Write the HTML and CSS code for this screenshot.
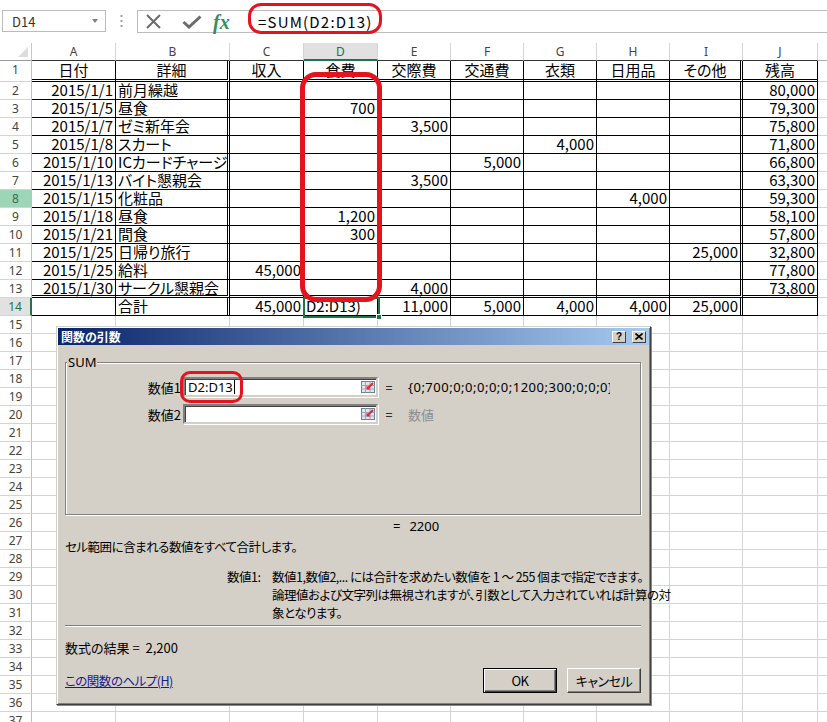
FILE: index.html
```html
<!DOCTYPE html>
<html lang="ja">
<head>
<meta charset="utf-8">
<link rel="stylesheet" href="styles.css">
</head>
<body>
<div class="topbar">
  <div class="namebox"><span>D14</span><span class="caret"></span></div>
  <div class="dots"><svg width="3" height="14" viewBox="0 0 3 14"><rect x="0.5" y="1" width="2" height="2" fill="#a0a0a0"/><rect x="0.5" y="6" width="2" height="2" fill="#a0a0a0"/><rect x="0.5" y="11" width="2" height="2" fill="#a0a0a0"/></svg></div>
  <div class="fbox">
    <div class="ficons">
      <svg class="ic-x" width="17" height="15" viewBox="0 0 17 15"><path d="M2 1L15 14M15 1L2 14" stroke="#6b6b6b" stroke-width="2" fill="none"/></svg>
      <svg class="ic-ok" width="20" height="14" viewBox="0 0 20 14"><path d="M1.5 7L7 12L18.5 1.5" stroke="#6b6b6b" stroke-width="3" fill="none"/></svg>
      <span class="fx">fx</span>
    </div>
    <div class="ftext">=SUM(D2:D13)</div>
  </div>
</div>

<div class="sheet cols">
  <div class="row">
    <div class="corner"><svg width="10" height="10" viewBox="0 0 10 10"><polygon points="10,0 10,10 0,10" fill="#dcdcdc"/></svg></div>
    <div class="ch">A</div><div class="ch">B</div><div class="ch">C</div><div class="ch sel">D</div><div class="ch">E</div><div class="ch">F</div><div class="ch">G</div><div class="ch">H</div><div class="ch">I</div><div class="ch">J</div><div class="ch kk"></div>
  </div>
  <div class="row r1">
    <div class="rh">1</div><div class="c m">日付</div><div class="c m dr">詳細</div><div class="c m">収入</div><div class="c m">食費</div><div class="c m">交際費</div><div class="c m">交通費</div><div class="c m">衣類</div><div class="c m">日用品</div><div class="c m dr">その他</div><div class="c m">残高</div><div class="k"></div>
  </div>
  <div class="row">
    <div class="rh">2</div><div class="c n">2015/1/1</div><div class="c dr">前月繰越</div><div class="c"></div><div class="c"></div><div class="c"></div><div class="c"></div><div class="c"></div><div class="c"></div><div class="c dr"></div><div class="c n">80,000</div><div class="k"></div>
  </div>
  <div class="row">
    <div class="rh">3</div><div class="c n">2015/1/5</div><div class="c dr">昼食</div><div class="c"></div><div class="c n">700</div><div class="c"></div><div class="c"></div><div class="c"></div><div class="c"></div><div class="c dr"></div><div class="c n">79,300</div><div class="k"></div>
  </div>
  <div class="row">
    <div class="rh">4</div><div class="c n">2015/1/7</div><div class="c dr">ゼミ新年会</div><div class="c"></div><div class="c"></div><div class="c n">3,500</div><div class="c"></div><div class="c"></div><div class="c"></div><div class="c dr"></div><div class="c n">75,800</div><div class="k"></div>
  </div>
  <div class="row">
    <div class="rh">5</div><div class="c n">2015/1/8</div><div class="c dr">スカート</div><div class="c"></div><div class="c"></div><div class="c"></div><div class="c"></div><div class="c n">4,000</div><div class="c"></div><div class="c dr"></div><div class="c n">71,800</div><div class="k"></div>
  </div>
  <div class="row">
    <div class="rh">6</div><div class="c n">2015/1/10</div><div class="c dr">ICカードチャージ</div><div class="c"></div><div class="c"></div><div class="c"></div><div class="c n">5,000</div><div class="c"></div><div class="c"></div><div class="c dr"></div><div class="c n">66,800</div><div class="k"></div>
  </div>
  <div class="row">
    <div class="rh">7</div><div class="c n">2015/1/13</div><div class="c dr">バイト懇親会</div><div class="c"></div><div class="c"></div><div class="c n">3,500</div><div class="c"></div><div class="c"></div><div class="c"></div><div class="c dr"></div><div class="c n">63,300</div><div class="k"></div>
  </div>
  <div class="row">
    <div class="rh g">8</div><div class="c n">2015/1/15</div><div class="c dr">化粧品</div><div class="c"></div><div class="c"></div><div class="c"></div><div class="c"></div><div class="c"></div><div class="c n">4,000</div><div class="c dr"></div><div class="c n">59,300</div><div class="k"></div>
  </div>
  <div class="row">
    <div class="rh">9</div><div class="c n">2015/1/18</div><div class="c dr">昼食</div><div class="c"></div><div class="c n">1,200</div><div class="c"></div><div class="c"></div><div class="c"></div><div class="c"></div><div class="c dr"></div><div class="c n">58,100</div><div class="k"></div>
  </div>
  <div class="row">
    <div class="rh">10</div><div class="c n">2015/1/21</div><div class="c dr">間食</div><div class="c"></div><div class="c n">300</div><div class="c"></div><div class="c"></div><div class="c"></div><div class="c"></div><div class="c dr"></div><div class="c n">57,800</div><div class="k"></div>
  </div>
  <div class="row">
    <div class="rh">11</div><div class="c n">2015/1/25</div><div class="c dr">日帰り旅行</div><div class="c"></div><div class="c"></div><div class="c"></div><div class="c"></div><div class="c"></div><div class="c"></div><div class="c n dr">25,000</div><div class="c n">32,800</div><div class="k"></div>
  </div>
  <div class="row">
    <div class="rh">12</div><div class="c n">2015/1/25</div><div class="c dr">給料</div><div class="c n">45,000</div><div class="c"></div><div class="c"></div><div class="c"></div><div class="c"></div><div class="c"></div><div class="c dr"></div><div class="c n">77,800</div><div class="k"></div>
  </div>
  <div class="row r13">
    <div class="rh">13</div><div class="c n">2015/1/30</div><div class="c dr">サークル懇親会</div><div class="c"></div><div class="c"></div><div class="c n">4,000</div><div class="c"></div><div class="c"></div><div class="c"></div><div class="c dr"></div><div class="c n">73,800</div><div class="k"></div>
  </div>
  <div class="row">
    <div class="rh hl">14</div><div class="c"></div><div class="c dr">合計</div><div class="c n">45,000</div><div class="c">D2:D13)</div><div class="c n">11,000</div><div class="c n">5,000</div><div class="c n">4,000</div><div class="c n">4,000</div><div class="c n dr">25,000</div><div class="c"></div><div class="k"></div>
  </div>
</div>

<div class="lower cols">
  <div class="rnums">
    <div>15</div><div>16</div><div>17</div><div>18</div><div>19</div><div>20</div><div>21</div><div>22</div><div>23</div><div>24</div><div>25</div><div>26</div><div>27</div><div>28</div><div>29</div><div>30</div><div>31</div><div>32</div><div>33</div><div>34</div><div>35</div><div>36</div><div>37</div>
  </div>
  <div class="gcol"></div><div class="gcol"></div><div class="gcol"></div><div class="gcol"></div><div class="gcol"></div><div class="gcol"></div><div class="gcol"></div><div class="gcol"></div><div class="gcol"></div><div class="gcol"></div><div class="gcol last"></div>
</div>

<div class="selbox"><span class="handle"></span></div>
<div class="redmark o1"></div>
<div class="redmark o2"></div>

<div class="dialog">
  <div class="titlebar">
    <span class="title">関数の引数</span>
    <div class="tbtns">
      <span class="tbtn">?</span>
      <span class="tbtn"><svg width="8" height="7" viewBox="0 0 8 7"><path d="M0.5 0.5L7.5 6.5M7.5 0.5L0.5 6.5" stroke="#000" stroke-width="1.6"/></svg></span>
    </div>
  </div>
  <div class="dbody">
    <div class="group">
      <div class="legend">SUM</div>
      <div class="arg">
        <span class="alabel">数値1</span>
        <span class="input"><span class="itext">D2:D13<span class="cursor"></span></span>
          <svg class="ricon" width="14" height="12" viewBox="0 0 14 12"><rect x="0.5" y="0.5" width="13" height="11" fill="#dfe6f0" stroke="#6f7f99"/><path d="M0.5 4.5H13.5M0.5 8H13.5M4.5 0.5V11.5M9 0.5V11.5" stroke="#9aa8bf" stroke-width="1"/><path d="M12 2L7 7" stroke="#e02828" stroke-width="2"/><path d="M5.5 4.5L5.5 8.5L9.5 8.5Z" fill="#e02828"/></svg>
        </span>
        <span class="eq">=</span>
        <span class="aval">{0;700;0;0;0;0;0;1200;300;0;0;0}</span>
      </div>
      <div class="arg arg2">
        <span class="alabel">数値2</span>
        <span class="input"><span class="itext"></span>
          <svg class="ricon" width="14" height="12" viewBox="0 0 14 12"><rect x="0.5" y="0.5" width="13" height="11" fill="#dfe6f0" stroke="#6f7f99"/><path d="M0.5 4.5H13.5M0.5 8H13.5M4.5 0.5V11.5M9 0.5V11.5" stroke="#9aa8bf" stroke-width="1"/><path d="M12 2L7 7" stroke="#e02828" stroke-width="2"/><path d="M5.5 4.5L5.5 8.5L9.5 8.5Z" fill="#e02828"/></svg>
        </span>
        <span class="eq">=</span>
        <span class="aval gray">数値</span>
      </div>
    </div>
    <div class="result"><span class="eq2">=</span><span>2200</span></div>
    <div class="desc">セル範囲に含まれる数値をすべて合計します。</div>
    <div class="argdesc">
      <span class="adl">数値1:</span>
      <span class="adt">数値1,数値2,... には合計を求めたい数値を 1 ～ 255 個まで指定できます。<br>論理値および文字列は無視されますが、引数として入力されていれば計算の対<br>象となります。</span>
    </div>
    <div class="sep"></div>
    <div class="formres">数式の結果 =&nbsp;&nbsp;2,200</div>
    <div class="foot">
      <span class="help">この関数のヘルプ(H)</span>
      <div class="btns"><span class="btn def">OK</span><span class="btn">キャンセル</span></div>
    </div>
  </div>
</div>
<div class="redmark o3"></div>
</body>
</html>
```

FILE: styles.css
```css
* { box-sizing: border-box; }
body {
  margin: 0;
  width: 827px;
  height: 722px;
  overflow: hidden;
  position: relative;
  background: #fff;
  font-family: "Noto Sans CJK JP", sans-serif;
  color: #000;
}

/* formula bar */
.topbar {
  height: 43px;
  display: flex;
  align-items: flex-start;
  padding-top: 10px;
}
.namebox {
  margin-left: 2px;
  width: 104px;
  height: 22px;
  border: 1px solid #bcbcbc;
  display: flex;
  align-items: center;
  justify-content: space-between;
  padding: 0 7px 0 9px;
  font-size: 13px;
  color: #333;
}
.caret {
  width: 0;
  height: 0;
  border-left: 3.5px solid transparent;
  border-right: 3.5px solid transparent;
  border-top: 4px solid #808080;
}
.dots {
  width: 31px;
  height: 22px;
  display: flex;
  align-items: center;
  justify-content: center;
}
.fbox {
  flex: 1;
  height: 23px;
  border: 1px solid #bcbcbc;
  border-right: none;
  display: flex;
  align-items: center;
}
.ficons {
  width: 109px;
  height: 100%;
  display: flex;
  align-items: center;
  padding-left: 7px;
}
.ic-ok { margin-left: 20px; }
.fx {
  margin-left: 11px;
  font-family: "Liberation Serif", serif;
  font-style: italic;
  font-weight: bold;
  font-size: 20px;
  color: #3e8a5a;
  line-height: 20px;
}
.ftext {
  padding-left: 11px;
  font-size: 15px;
  line-height: 20px;
  letter-spacing: 1.2px;
}

/* sheet */
.cols {
  display: grid;
  grid-template-columns: 32px 84px 114px 74px 74px 73px 73px 73px 73px 73px 75px 1fr;
}
.sheet {
  grid-template-rows: 18px 21px;
  grid-auto-rows: 18px;
}
.row { display: contents; }
.corner {
  border-right: 1px solid #c6c6c6;
  border-bottom: 1px solid #9b9b9b;
  display: flex;
  justify-content: flex-end;
  align-items: flex-end;
  padding: 0 3px 3px 0;
}
.ch {
  border-right: 1px solid #d4d4d4;
  border-bottom: 1px solid #333;
  font-family: "Noto Sans", sans-serif;
  font-size: 12px;
  line-height: 17px;
  color: #444;
  text-align: center;
}
.ch.sel {
  background: #e1e1e1;
  color: #217346;
  border-bottom: 2px solid #217346;
}
.ch.kk { border-right: none; border-bottom-color: #ababab; }
.rh {
  border-right: 1px solid #bfbfbf;
  border-bottom: 1px solid #d4d4d4;
  font-family: "Noto Sans", sans-serif;
  font-size: 12px;
  line-height: 17px;
  color: #444;
  text-align: center;
}
.rh.g { background: #9fd5b7; color: #3b6b4f; }
.rh.hl {
  background: #e1e1e1;
  color: #217346;
  border-right: 2px solid #217346;
}
.c {
  border-right: 1px solid #000;
  border-bottom: 1px solid #000;
  font-size: 15px;
  line-height: 16px;
  padding: 0 2px;
  white-space: nowrap;
  font-feature-settings: "palt";
}
.r1 > .c { border-bottom: 3px double #000; padding-top: 1px; }
.r13 > .c { border-bottom: 3px double #000; line-height: 15px; }
.c.dr { border-right: 3px double #000; }
.n { text-align: right; }
.m { text-align: center; }
.k { border-bottom: 1px solid #d4d4d4; }

.lower { height: 406px; overflow: hidden; }
.rnums { display: flex; flex-direction: column; }
.rnums div {
  flex: none;
  height: 18px;
  border-right: 1px solid #bfbfbf;
  border-bottom: 1px solid #d4d4d4;
  font-family: "Noto Sans", sans-serif;
  font-size: 12px;
  line-height: 17px;
  color: #444;
  text-align: center;
}
.gcol {
  border-right: 1px solid #d4d4d4;
  background: repeating-linear-gradient(to bottom, transparent 0, transparent 17px, #d4d4d4 17px, #d4d4d4 18px);
}
.gcol.last { border-right: none; }

/* overlays */
.selbox {
  position: absolute;
  left: 303px;
  top: 297px;
  width: 77px;
  height: 21px;
  border: 2px solid #217346;
}
.handle {
  position: absolute;
  right: -4px;
  bottom: -4px;
  width: 6px;
  height: 6px;
  background: #217346;
  border: 1px solid #fff;
}
.redmark {
  position: absolute;
  border-style: solid;
  border-color: #e3141e;
}
.o1 { left: 248px; top: 3px; width: 134px; height: 31px; border-width: 3px; border-radius: 13px; }
.o2 { left: 300px; top: 72px; width: 82px; height: 230px; border-width: 5px; border-radius: 16px; }
.o3 { left: 180px; top: 371px; width: 63px; height: 32px; border-width: 3px; border-radius: 10px; }

/* dialog */
.dialog {
  position: absolute;
  left: 56px;
  top: 326px;
  width: 595px;
  height: 379px;
  background: #d4d0c8;
  border: 1px solid;
  border-color: #d4d0c8 #404040 #404040 #d4d0c8;
  box-shadow: inset 1px 1px 0 #fff, inset -1px -1px 0 #808080, 1px 1px 0 #8a8a8a;
  padding: 1px;
  font-size: 12.5px;
  letter-spacing: -0.5px;
  font-feature-settings: "palt";
  color: #000;
}
.titlebar {
  height: 17px;
  background: linear-gradient(to right, #0a246a, #a6caf0);
  display: flex;
  align-items: center;
  justify-content: space-between;
  padding: 0 3px 0 3px;
  letter-spacing: 0;
}
.title {
  color: #fff;
  font-weight: bold;
  font-size: 12px;
  line-height: 14px;
}
.tbtns { display: flex; gap: 6px; }
.tbtn {
  width: 14px;
  height: 12px;
  background: #d4d0c8;
  border: 1px solid;
  border-color: #fff #404040 #404040 #fff;
  display: flex;
  align-items: center;
  justify-content: center;
  font-family: "Liberation Sans", sans-serif;
  font-weight: bold;
  font-size: 10px;
  line-height: 10px;
}
.dbody {
  padding: 0 8px 0 7px;
}
.group {
  margin-top: 17px;
  height: 153px;
  border: 1px solid #808080;
  box-shadow: inset 1px 1px 0 #fff, 1px 1px 0 #fff;
}
.legend {
  margin: -8px 0 0 1px;
  width: max-content;
  padding: 0 1px;
  background: #d4d0c8;
  line-height: 14px;
  font-size: 13px;
  letter-spacing: 0;
  font-family: "Noto Sans", "Noto Sans CJK JP", sans-serif;
}
.arg {
  margin-top: 8px;
  height: 20px;
  display: flex;
  align-items: center;
}
.arg2 { margin-top: 7px; }
.alabel {
  width: 115px;
  text-align: right;
  margin-right: 2px;
  font-size: 13px;
  letter-spacing: 0;
}
.input {
  width: 195px;
  height: 20px;
  background: #fff;
  border: 2px solid;
  border-color: #808080 #d4d0c8 #d4d0c8 #808080;
  box-shadow: inset 1px 1px 0 #404040, 1px 1px 0 #fff;
  display: flex;
  align-items: center;
  justify-content: space-between;
  padding: 0 1px 0 3px;
  letter-spacing: 0;
}
.itext {
  display: flex;
  align-items: center;
  font-family: "Noto Sans", sans-serif;
  font-size: 13px;
  line-height: 14px;
}
.cursor {
  display: inline-block;
  width: 1px;
  height: 14px;
  background: #000;
  margin-left: 1px;
}
.eq {
  width: 22px;
  text-align: center;
  letter-spacing: 0;
}
.aval {
  margin-left: 8px;
  width: 202px;
  overflow: hidden;
  white-space: nowrap;
  font-size: 13px;
  font-family: "Noto Sans", "Noto Sans CJK JP", sans-serif;
  letter-spacing: 0.5px;
}
.aval.gray { color: #8d8d8d; font-family: "Noto Sans CJK JP", sans-serif; letter-spacing: 0; }
.result {
  margin-top: 4px;
  padding-left: 328px;
  line-height: 14px;
  font-size: 13px;
  letter-spacing: 0;
  font-family: "Noto Sans", sans-serif;
}
.eq2 { margin-right: 9px; }
.desc {
  margin-top: 7px;
  line-height: 14px;
}
.argdesc {
  margin-top: 14px;
  display: flex;
  line-height: 18px;
}
.adl {
  margin-left: 162px;
  width: 45px;
  flex: none;
}
.adt { white-space: nowrap; }
.sep {
  margin-top: 3px;
  height: 2px;
  border-top: 1px solid #808080;
  border-bottom: 1px solid #fff;
}
.formres {
  margin-top: 14px;
  line-height: 14px;
  letter-spacing: 0;
  font-size: 13px;
}
.foot {
  margin-top: 13px;
  height: 25px;
  display: flex;
  align-items: center;
  justify-content: space-between;
}
.help {
  color: #1a1a8c;
  text-decoration: underline;
}
.btns { display: flex; gap: 10px; }
.btn {
  width: 74px;
  height: 25px;
  display: flex;
  align-items: center;
  justify-content: center;
  border: 1px solid;
  border-color: #fff #404040 #404040 #fff;
  box-shadow: inset -1px -1px 0 #808080;
  font-size: 13px;
}
.btn.def {
  border: 1px solid #000;
  box-shadow: inset 1px 1px 0 #fff, inset -1px -1px 0 #404040, inset -2px -2px 0 #808080;
}
```
